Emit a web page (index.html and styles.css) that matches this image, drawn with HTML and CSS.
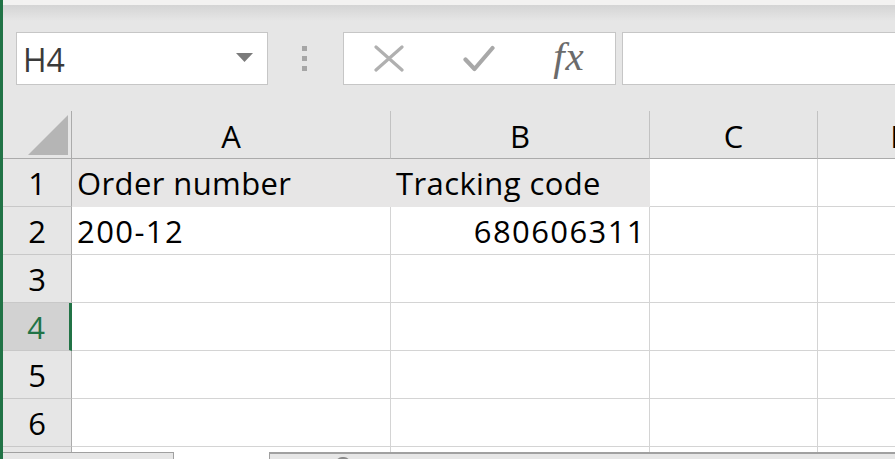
FILE: index.html
```html
<!DOCTYPE html>
<html>
<head>
<meta charset="utf-8">
<link rel="stylesheet" href="styles.css">
</head>
<body>
<div class="app">
  <div class="top"></div>
  <div class="fbar">
    <div class="namebox">
      <span class="nb-text">H4</span>
      <svg class="nb-arrow" width="17" height="9" viewBox="0 0 17 9"><polygon points="0,0 17,0 8.5,9" fill="#7b7b7b"/></svg>
    </div>
    <div class="grip"><i></i><i></i><i></i></div>
    <div class="fbtns">
      <div class="fbtn">
        <svg width="30" height="27" viewBox="0 0 30 27"><path d="M2 2 L28 25 M28 2 L2 25" stroke="#b0b0b0" stroke-width="3.2" stroke-linecap="round" fill="none"/></svg>
      </div>
      <div class="fbtn">
        <svg width="32" height="28" viewBox="0 0 32 28"><path d="M2.5 14.5 L11.5 24 L29.5 3" stroke="#a8a8a8" stroke-width="4.2" stroke-linecap="round" stroke-linejoin="round" fill="none"/></svg>
      </div>
      <div class="fbtn"><span class="fx">fx</span></div>
    </div>
    <div class="finput"></div>
  </div>
  <div class="gap"></div>
  <div class="sheet">
    <div class="corner"><svg width="68" height="47" viewBox="0 0 68 47"><polygon points="25,44 65,44 65,4" fill="#b5b5b5"/></svg></div>
    <div class="ch">A</div>
    <div class="ch">B</div>
    <div class="ch">C</div>
    <div class="ch">D</div>

    <div class="rh">1</div>
    <div class="c fill">Order number</div>
    <div class="c fill">Tracking code</div>
    <div class="c"></div>
    <div class="c"></div>

    <div class="rh">2</div>
    <div class="c digits">200-12</div>
    <div class="c digits num">680606311</div>
    <div class="c"></div>
    <div class="c"></div>

    <div class="rh">3</div>
    <div class="c"></div>
    <div class="c"></div>
    <div class="c"></div>
    <div class="c"></div>

    <div class="rh sel">4</div>
    <div class="c"></div>
    <div class="c"></div>
    <div class="c"></div>
    <div class="c"></div>

    <div class="rh">5</div>
    <div class="c"></div>
    <div class="c"></div>
    <div class="c"></div>
    <div class="c"></div>

    <div class="rh">6</div>
    <div class="c"></div>
    <div class="c"></div>
    <div class="c"></div>
    <div class="c"></div>

    <div class="rh"></div>
    <div class="c"></div>
    <div class="c"></div>
    <div class="c"></div>
    <div class="c"></div>
  </div>
  <div class="tabs">
    <div class="tab-nav"></div>
    <div class="tab-space"></div>
    <div class="hscroll"><span class="thumb"></span></div>
  </div>
</div>
</body>
</html>
```

FILE: styles.css
```css
* { box-sizing: border-box; }
html, body { margin: 0; padding: 0; overflow: hidden; }
body { background: #e6e6e6; font-family: "Open Sans", "Liberation Sans", sans-serif; }

.app {
  width: 895px;
  height: 459px;
  border-left: 3px solid #217346;
  background: #e6e6e6;
  display: flex;
  flex-direction: column;
  overflow: hidden;
}

.top {
  flex: none;
  height: 32px;
  background: linear-gradient(#f3f2f1 0, #f3f2f1 5px, #d4d4d4 5px, #e6e6e6 21px);
}

.fbar {
  flex: none;
  height: 53px;
  display: flex;
  padding-left: 13px;
}

.namebox {
  width: 252px;
  height: 53px;
  background: #fff;
  border: 1px solid #c6c6c6;
  display: flex;
  align-items: center;
  justify-content: space-between;
  padding: 0 14px 0 6px;
}
.nb-text {
  font-size: 32px;
  line-height: 1;
  color: #3a3a3a;
  margin-top: 3px;
}
.nb-arrow { margin-top: -2px; }

.grip {
  width: 75px;
  display: flex;
  flex-direction: column;
  align-items: center;
  justify-content: center;
  gap: 5px;
  padding-right: 2px;
}
.grip i {
  display: block;
  width: 5px;
  height: 5px;
  background: #a6a6a6;
}

.fbtns {
  width: 273px;
  height: 53px;
  background: #fff;
  border: 1px solid #c6c6c6;
  display: flex;
}
.fbtn {
  width: 90px;
  display: flex;
  align-items: center;
  justify-content: center;
}
.fx {
  font-family: "Liberation Serif", serif;
  font-style: italic;
  font-size: 41px;
  line-height: 1;
  color: #6b6b6b;
  margin-top: -4px;
  letter-spacing: 1px;
}

.finput {
  flex: 1;
  margin-left: 6px;
  height: 53px;
  background: #fff;
  border: 1px solid #c6c6c6;
  border-right: none;
}

.gap { flex: none; height: 26px; }

.sheet {
  flex: none;
  width: 892px;
  height: 341px;
  overflow: hidden;
  background: #fff;
  display: grid;
  grid-template-columns: 69px 319px 259px 168px 168px;
  grid-auto-rows: 48px;
  font-size: 31px;
  color: #000;
}

.corner {
  background: #e6e6e6;
  border-right: 1px solid #ababab;
  border-bottom: 1px solid #ababab;
}
.corner svg { display: block; }

.ch {
  background: #e6e6e6;
  border-right: 1px solid #c2c2c2;
  border-bottom: 1px solid #ababab;
  text-align: center;
  line-height: 51px;
}

.rh {
  background: #e6e6e6;
  border-right: 1px solid #ababab;
  border-bottom: 1px solid #c8c8c8;
  text-align: center;
  line-height: 49px;
}
.rh.sel {
  background: #d2d2d2;
  color: #217346;
  border-right: 3px solid #217346;
}

.c {
  border-right: 1px solid #d4d4d4;
  border-bottom: 1px solid #d4d4d4;
  line-height: 49px;
  padding: 0 5px;
  white-space: nowrap;
  letter-spacing: 0.4px;
}
.c.digits { letter-spacing: 1.4px; }
.c.fill {
  background: #e7e6e6;
  border-color: #e7e6e6;
}
.c.num { text-align: right; padding-right: 3px; }

.tabs {
  flex: none;
  height: 7px;
  display: flex;
  background: #fff;
}
.tab-nav {
  width: 171px;
  background: #e6e6e6;
  border-top: 1px solid #a0a0a0;
  border-right: 1px solid #a0a0a0;
}
.tab-space { width: 95px; background: #fff; }
.hscroll {
  flex: 1;
  background: #e6e6e6;
  border-top: 2px solid #a0a0a0;
  border-left: 1px solid #a0a0a0;
  display: flex;
  padding-left: 66px;
}
.thumb {
  display: block;
  width: 14px;
  height: 6px;
  margin-top: 3px;
  border-radius: 7px 7px 0 0;
  background: #8a8a8a;
}
```
